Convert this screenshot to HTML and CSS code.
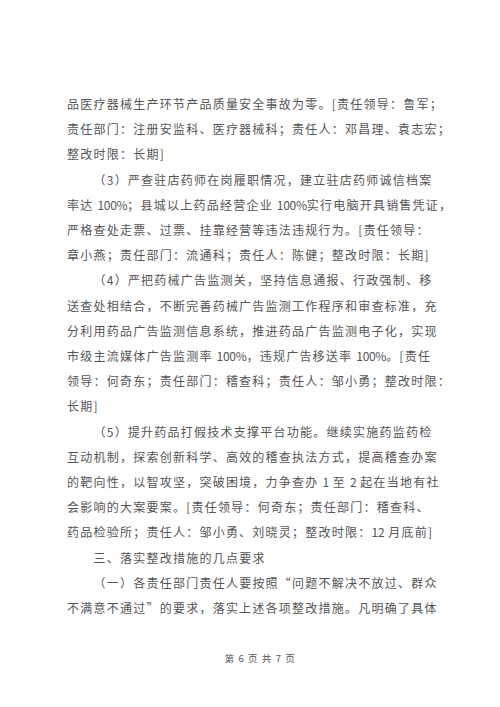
FILE: index.html
```html
<!DOCTYPE html>
<html lang="zh-CN">
  <head>
    <meta charset="UTF-8" />
    <meta name="viewport" content="width=device-width, initial-scale=1.0" />
    <title>整改措施 第6页</title>
    <link rel="stylesheet" href="styles.css">
  </head>
  <body>
    <div class="page">
      <div class="text">
        <p class="para">品医疗器械生产环节产品质量安全事故为零。[责任领导：鲁军；<br>责任部门：注册安监科、医疗器械科；责任人：邓昌理、袁志宏；<br>整改时限：长期]</p>
        <p class="para indent">（3）严查驻店药师在岗履职情况，建立驻店药师诚信档案<br>率达 <span class="num">100%</span>；县城以上药品经营企业 <span class="num">100%</span>实行电脑开具销售凭证，<br>严格查处走票、过票、挂靠经营等违法违规行为。[责任领导：<br>章小燕；责任部门：流通科；责任人：陈健；整改时限：长期]</p>
        <p class="para indent">（4）严把药械广告监测关，坚持信息通报、行政强制、移<br>送查处相结合，不断完善药械广告监测工作程序和审查标准，充<br>分利用药品广告监测信息系统，推进药品广告监测电子化，实现<br>市级主流媒体广告监测率 <span class="num">100%</span>，违规广告移送率 <span class="num">100%</span>。[责任<br>领导：何奇东；责任部门：稽查科；责任人：邹小勇；整改时限：<br>长期]</p>
        <p class="para indent">（5）提升药品打假技术支撑平台功能。继续实施药监药检<br>互动机制，探索创新科学、高效的稽查执法方式，提高稽查办案<br>的靶向性，以智攻坚，突破困境，力争查办 <span class="num">1</span> 至 <span class="num">2</span> 起在当地有社<br>会影响的大案要案。[责任领导：何奇东；责任部门：稽查科、<br>药品检验所；责任人：邹小勇、刘晓灵；整改时限：<span class="num">12</span> 月底前]</p>
        <p class="para indent">三、落实整改措施的几点要求</p>
        <p class="para indent">（一）各责任部门责任人要按照“问题不解决不放过、群众<br>不满意不通过”的要求，落实上述各项整改措施。凡明确了具体</p>
      </div>
      <div class="footer">第 6 页 共 7 页</div>
    </div>
  </body>
</html>
```

FILE: styles.css
```css
body {
  margin: 0;
  background: #fff;
}
.page {
  width: 500px;
  height: 707px;
  padding-top: 91px;
  box-sizing: border-box;
  overflow: hidden;
}
.text {
  width: 386px;
  margin-left: 67px;
  font-family: "Noto Sans CJK SC", sans-serif;
  font-size: 12px;
  letter-spacing: 1.24px;
  line-height: 25.2px;
  color: #555;
}
.para {
  margin: 0;
  white-space: nowrap;
}
.indent {
  text-indent: 26.5px;
}
.num {
  letter-spacing: -0.3px;
}
.footer {
  width: 386px;
  margin: 31px 0 0 67px;
  text-align: center;
  font-family: "Noto Sans CJK SC", sans-serif;
  font-size: 9.5px;
  letter-spacing: 0.6px;
  word-spacing: 1px;
  line-height: 14px;
  color: #555;
  white-space: pre;
}
```
